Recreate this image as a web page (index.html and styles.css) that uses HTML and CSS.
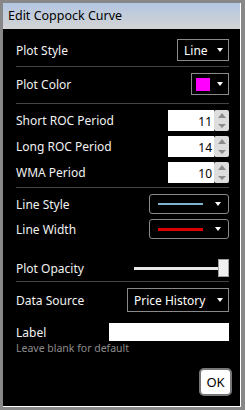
FILE: index.html
```html
<!DOCTYPE html>
<html lang="en">

<head>
    <meta charset="UTF-8">
    <meta name="viewport" content="width=device-width, initial-scale=1.0">
    <title>Edit Coppock Curve</title>
    <link rel="stylesheet" href="styles.css">
</head>

<body>
    <div class="dialog">
        <div class="window">
            <div class="titlebar">Edit Coppock Curve</div>

            <div class="content">
                <div class="row row-style">
                    <span class="label">Plot Style</span>
                    <div class="select select-line">
                        <span>Line</span>
                        <span class="arrow"></span>
                    </div>
                </div>
                <div class="sep sep-1"></div>

                <div class="row row-color">
                    <span class="label">Plot Color</span>
                    <div class="select select-color">
                        <span class="swatch"></span>
                        <span class="arrow"></span>
                    </div>
                </div>
                <div class="sep sep-2"></div>

                <div class="row row-spin first">
                    <span class="label">Short ROC Period</span>
                    <div class="spin">
                        <span class="spin-value">11</span>
                        <span class="spin-btns"><i class="up"></i><i class="down"></i></span>
                    </div>
                </div>
                <div class="row row-spin">
                    <span class="label">Long ROC Period</span>
                    <div class="spin">
                        <span class="spin-value">14</span>
                        <span class="spin-btns"><i class="up"></i><i class="down"></i></span>
                    </div>
                </div>
                <div class="row row-spin">
                    <span class="label">WMA Period</span>
                    <div class="spin">
                        <span class="spin-value">10</span>
                        <span class="spin-btns"><i class="up"></i><i class="down"></i></span>
                    </div>
                </div>
                <div class="sep sep-3"></div>

                <div class="row row-linepick first">
                    <span class="label">Line Style</span>
                    <div class="linepick">
                        <span class="sample sample-blue"></span>
                        <span class="arrow"></span>
                    </div>
                </div>
                <div class="row row-linepick">
                    <span class="label">Line Width</span>
                    <div class="linepick">
                        <span class="sample sample-red"></span>
                        <span class="arrow"></span>
                    </div>
                </div>

                <div class="row row-opacity">
                    <span class="label">Plot Opacity</span>
                    <div class="slider">
                        <span class="track"></span>
                        <span class="thumb"></span>
                    </div>
                </div>
                <div class="sep sep-4"></div>

                <div class="row row-source">
                    <span class="label">Data Source</span>
                    <div class="select select-source">
                        <span>Price History</span>
                        <span class="arrow"></span>
                    </div>
                </div>

                <div class="row row-label">
                    <span class="label">Label</span>
                    <div class="text-input"></div>
                </div>
                <div class="hint">Leave blank for default</div>

                <div class="footer">
                    <button class="ok-button">OK</button>
                </div>
            </div>
        </div>
    </div>
</body>

</html>
```

FILE: styles.css
```css
body {
    margin: 0;
    background-color: #888888;
    font-family: "Noto Sans", "Open Sans", sans-serif;
}

.dialog {
    width: 245px;
    height: 410px;
    box-sizing: border-box;
    padding: 3px 4px 3px 3px;
    background-color: #888888;
}

.window {
    height: 100%;
    box-sizing: border-box;
    background-color: #000000;
    border-right: 1px solid #ffffff;
    border-bottom: 1px solid #ffffff;
    display: flex;
    flex-direction: column;
}

.titlebar {
    height: 26px;
    line-height: 26px;
    padding-left: 5px;
    font-size: 12.5px;
    color: #000000;
    background: linear-gradient(to bottom, #b3c6e2, #d4d4d4);
}

.content {
    padding: 0 11px 0 13px;
    color: #f2f2f2;
    font-size: 12px;
}

.row {
    display: flex;
    justify-content: space-between;
    align-items: center;
}

.sep {
    height: 1px;
    background-color: #444444;
}

/* drop downs */
.select {
    height: 22px;
    box-sizing: border-box;
    border: 1px solid #8a8a8a;
    display: flex;
    align-items: center;
    justify-content: space-between;
    padding: 0 5px 0 6px;
    color: #ffffff;
}

.arrow {
    width: 0;
    height: 0;
    border-left: 3px solid transparent;
    border-right: 3px solid transparent;
    border-top: 4px solid #ffffff;
}

.row-style {
    margin-top: 10px;
}

.select-line {
    width: 52px;
}

.sep-1 {
    margin-top: 5px;
}

.row-color {
    margin-top: 6px;
}

.select-color {
    width: 38px;
    padding-left: 4px;
}

.swatch {
    width: 14px;
    height: 13px;
    background-color: #ff00ff;
}

.sep-2 {
    margin-top: 8px;
}

/* number spinners */
.row-spin {
    margin-top: 5px;
}

.row-spin.first {
    margin-top: 6px;
}

.spin {
    display: flex;
    height: 21px;
}

.spin-value {
    width: 44px;
    background-color: #ffffff;
    color: #000000;
    text-align: right;
    padding-right: 2px;
    line-height: 24px;
    font-size: 12px;
}

.spin-btns {
    width: 15px;
    background-color: #dddddd;
    border-radius: 2px;
    display: flex;
    flex-direction: column;
    justify-content: space-around;
    align-items: center;
}

.spin-btns i {
    width: 0;
    height: 0;
    border-left: 4px solid transparent;
    border-right: 4px solid transparent;
}

.spin-btns .up {
    border-bottom: 5px solid #8c8c8c;
}

.spin-btns .down {
    border-top: 4px solid #8c8c8c;
}

.sep-3 {
    margin-top: 4px;
}

/* line pickers */
.row-linepick {
    margin-top: 5px;
}

.row-linepick.first {
    margin-top: 6px;
}

.linepick {
    width: 80px;
    height: 20px;
    box-sizing: border-box;
    border: 1px solid #8a8a8a;
    border-radius: 3px;
    display: flex;
    align-items: center;
    justify-content: space-between;
    padding: 0 7px 0 8px;
}

.sample {
    width: 45px;
    height: 2px;
}

.sample-blue {
    background-color: #7fb2cc;
}

.sample-red {
    height: 3px;
    background-color: #dd0000;
}

/* slider */
.row-opacity {
    margin-top: 20px;
}

.slider {
    width: 95px;
    height: 18px;
    display: flex;
    align-items: center;
}

.track {
    flex: 1;
    height: 3px;
    background-color: #e8e8e8;
}

.thumb {
    width: 9px;
    height: 16px;
    background-color: #f0f0f0;
    border: 1px solid #a0a0a0;
}

.sep-4 {
    margin-top: 4px;
}

.row-source {
    margin-top: 6px;
}

.select-source {
    width: 102px;
    height: 24px;
}

.row-label {
    margin-top: 11px;
}

.text-input {
    width: 120px;
    height: 18px;
    background-color: #ffffff;
}

.hint {
    margin-top: 0;
    font-size: 10.5px;
    color: #8c8c8c;
}

.footer {
    display: flex;
    justify-content: flex-end;
    margin-top: 13px;
    margin-right: -3px;
}

.ok-button {
    width: 33px;
    height: 28px;
    padding: 0;
    background-color: #ffffff;
    color: #000000;
    border: 2px solid #777777;
    border-radius: 5px;
    font-family: "Noto Sans", "Open Sans", sans-serif;
    font-size: 13px;
}
```
